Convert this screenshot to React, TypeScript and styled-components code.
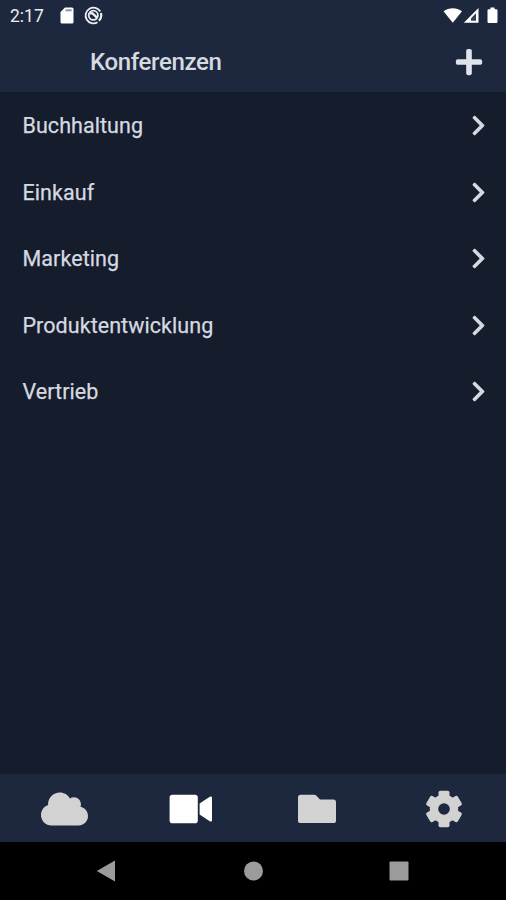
import React from 'react';
import styled, { createGlobalStyle } from 'styled-components';
import { FaChevronRight, FaCloud, FaPlus } from 'react-icons/fa';

const GlobalStyle = createGlobalStyle`
  *, *::before, *::after { box-sizing: border-box; }
  body { margin: 0; background: #151c2b; }
`;

const Screen = styled.div`
  display: flex;
  flex-direction: column;
  width: 506px;
  height: 900px;
  overflow: hidden;
  background: #151c2b;
  color: #d5d9e0;
  font-family: Roboto, "Liberation Sans", sans-serif;
`;

const StatusBar = styled.div`
  display: flex;
  align-items: center;
  justify-content: space-between;
  height: 32px;
  padding: 0 7px 1px 10px;
  background: #1d283e;
  color: #eceef2;
`;

const StatusGroup = styled.div`
  display: flex;
  align-items: center;
  gap: 10px;

  svg { display: block; }
`;

const Clock = styled.span`
  width: 40px;
  font-size: 17.5px;
  line-height: 32px;
  padding-top: 1px;
`;

const Header = styled.header`
  display: flex;
  align-items: center;
  justify-content: space-between;
  height: 60px;
  padding: 0 22px 0 90px;
  background: #1d283e;
`;

const Title = styled.h1`
  margin: 0;
  padding-top: 1px;
  font-size: 24px;
  font-weight: 500;
  line-height: 59px;
  letter-spacing: -0.35px;
`;

const AddButton = styled.button`
  display: flex;
  padding: 0;
  border: 0;
  background: none;
  color: #dfe3ec;
`;

const List = styled.ul`
  flex: 1;
  margin: 0;
  padding: 0;
  list-style: none;
`;

const Row = styled.li`
  display: flex;
  align-items: center;
  justify-content: space-between;
  height: 66.5px;
  padding: 1px 16px 0 22.5px;
  font-size: 21.5px;
  letter-spacing: 0.06px;
  -webkit-text-stroke: 0.25px currentColor;
`;

const Tabs = styled.nav`
  display: grid;
  grid-template-columns: repeat(4, 1fr);
  height: 68px;
  background: #1d283e;
`;

const Tab = styled.button<{ $active?: boolean }>`
  display: flex;
  align-items: center;
  justify-content: center;
  padding: 2px 0 0 2px;
  border: 0;
  background: none;
  color: ${({ $active }) => ($active ? '#ffffff' : '#d2d2d2')};
`;

const CloudIcon = styled(FaCloud)`
  width: 47px;
  height: 38px;
`;

const SystemBar = styled.div`
  display: flex;
  align-items: center;
  justify-content: space-between;
  height: 58px;
  padding: 0 97px 0 96px;
  background: #000;
`;

const conferences = ['Buchhaltung', 'Einkauf', 'Marketing', 'Produktentwicklung', 'Vertrieb'];

const SdCardIcon = () => (
  <svg width="14" height="17" viewBox="0 0 14 17">
    <path d="M5 .5h7a1.5 1.5 0 0 1 1.5 1.5v13a1.5 1.5 0 0 1-1.5 1.5H2A1.5 1.5 0 0 1 .5 15V5z" fill="#fff" />
    <path d="M5.5 2.3h6.2v2H5.5z" fill="#8b93a5" />
  </svg>
);

const SyncIcon = () => (
  <svg width="19" height="19" viewBox="0 0 19 19" fill="none" stroke="#eceef2">
    <path d="M13.5 16.3A7.9 7.9 0 1 1 16.3 5.5" strokeWidth="1.8" />
    <path d="M16.9 7a8 8 0 0 1-2 7.8" strokeWidth="2.2" />
    <circle cx="9.3" cy="9.3" r="4.6" strokeWidth="1.8" />
    <path d="M5.6 7.2l3 .2 4.6 4.4" strokeWidth="2.4" />
  </svg>
);

const SignalIcons = () => (
  <svg width="56" height="18" viewBox="0 0 56 18">
    <path d="M.5 4.2C6 .1 13.5.1 19 4.2L9.8 15.8z" fill="#fff" />
    <path d="M35.5 1v14.8H20.8z" fill="#fff" />
    <path d="M33 6.2v7.6h-5V11.2z" fill="#354058" />
    <path d="M47.4.5h4.2v1.8h1.7q1.2 0 1.2 1.2v11.3q0 1.2-1.2 1.2h-7.6q-1.2 0-1.2-1.2V3.5q0-1.2 1.2-1.2h1.7z" fill="#fff" />
  </svg>
);

const VideoIcon = () => (
  <svg width="44" height="30" viewBox="0 0 44 30" fill="currentColor">
    <rect x=".6" y=".8" width="28.2" height="28.4" rx="2.8" />
    <path d="M30.6 9.6 40.8 2.7Q43 1.7 43 3.8V26.2Q43 28.3 40.8 27.3L30.6 20.4z" />
  </svg>
);

const FolderIcon = () => (
  <svg width="38" height="30" viewBox="0 0 38 30" fill="currentColor">
    <path d="M2.6.7H16.2Q17.4.7 18.2 1.5L22 5.4H35.4Q38 5.4 38 8V26.4Q38 29 35.4 29H2.6Q0 29 0 26.4V3.3Q0 .7 2.6.7z" />
  </svg>
);

const GearIcon = () => (
  <svg width="38" height="38" viewBox="-19 -19 38 38">
    <g fill="currentColor">
      <circle r="14.2" />
      {[0, 60, 120].map((angle) => (
        <rect key={angle} x="-5.5" y="-18.2" width="11" height="36.4" rx="1.8" transform={`rotate(${angle})`} />
      ))}
    </g>
    <circle r="5.8" fill="#1d283e" />
  </svg>
);

export default function App() {
  return (
    <Screen>
      <GlobalStyle />
      <StatusBar>
        <StatusGroup>
          <Clock>2:17</Clock>
          <SdCardIcon />
          <SyncIcon />
        </StatusGroup>
        <SignalIcons />
      </StatusBar>
      <Header>
        <Title>Konferenzen</Title>
        <AddButton aria-label="Hinzufügen">
          <FaPlus size={30} />
        </AddButton>
      </Header>
      <List>
        {conferences.map((name) => (
          <Row key={name}>
            <span>{name}</span>
            <FaChevronRight size={23} />
          </Row>
        ))}
      </List>
      <Tabs>
        <Tab aria-label="Cloud"><CloudIcon /></Tab>
        <Tab aria-label="Konferenzen" $active><VideoIcon /></Tab>
        <Tab aria-label="Dateien"><FolderIcon /></Tab>
        <Tab aria-label="Einstellungen"><GearIcon /></Tab>
      </Tabs>
      <SystemBar>
        <svg width="20" height="22" viewBox="0 0 20 22"><path d="M19 .5v21L.8 11z" fill="#9b9b9b" /></svg>
        <svg width="20" height="20" viewBox="0 0 20 20"><circle cx="10.5" cy="10" r="9.5" fill="#9b9b9b" /></svg>
        <svg width="20" height="20" viewBox="0 0 20 20"><rect x=".5" y=".5" width="19" height="19" rx="1" fill="#9b9b9b" /></svg>
      </SystemBar>
    </Screen>
  );
}
